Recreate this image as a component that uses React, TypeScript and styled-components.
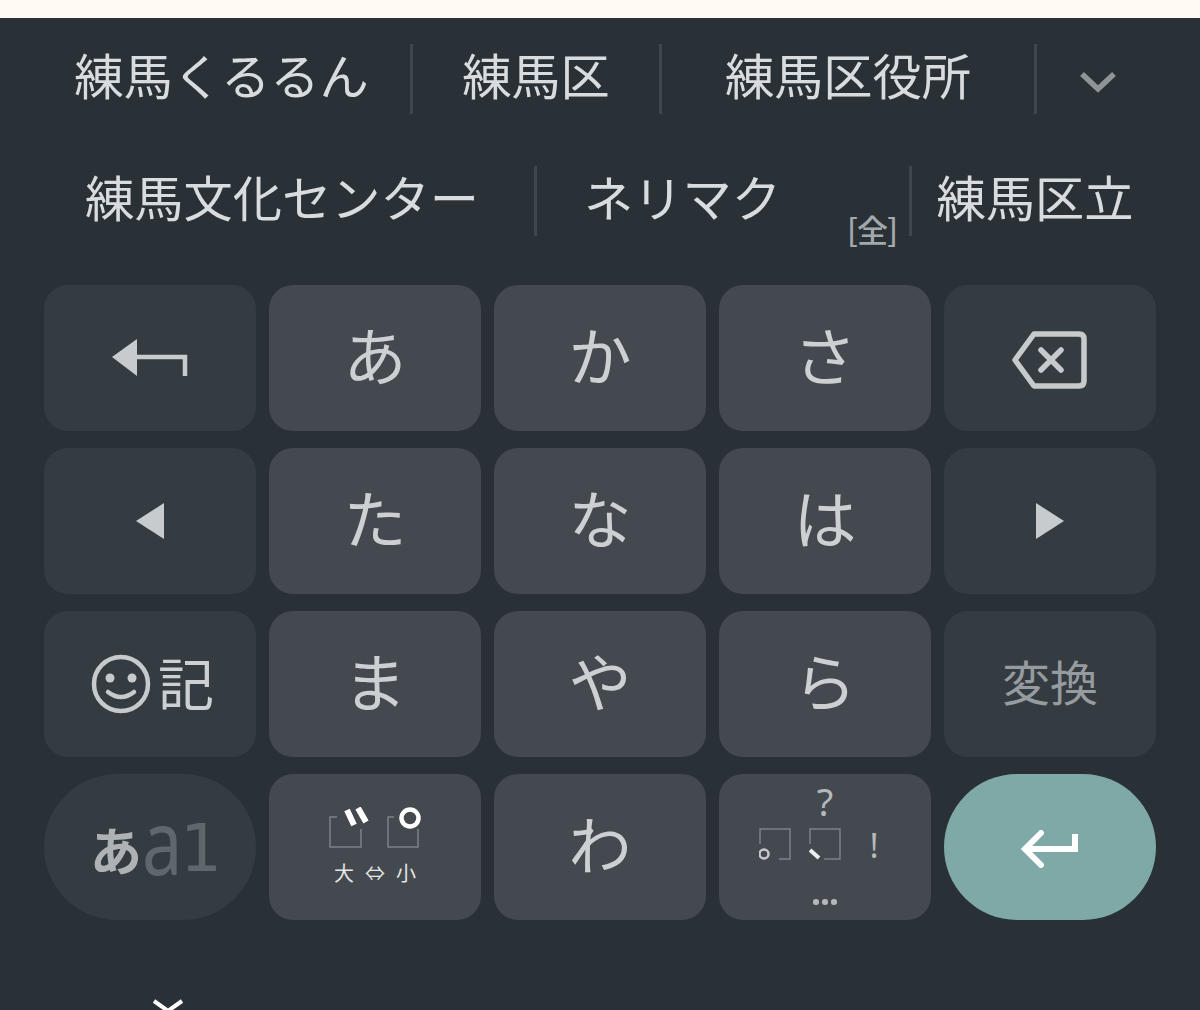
import React from "react";
import styled, { createGlobalStyle } from "styled-components";

const GlobalStyle = createGlobalStyle`
  html, body {
    margin: 0;
    padding: 0;
    background: #2a3136;
  }
  body {
    font-family: "Noto Sans CJK JP", "Noto Sans", sans-serif;
  }
`;

const Page = styled.div`
  width: 1200px;
  height: 1010px;
  overflow: hidden;
  display: flex;
  flex-direction: column;
  background: #2a3136;
`;

const TopStrip = styled.div`
  height: 18px;
  flex: none;
  background: #fffaf3;
`;

const Suggestions = styled.div`
  display: flex;
  flex-direction: column;
  gap: 52px;
  padding-top: 26px;
`;

const SuggestionRow = styled.div<{ $columns: string; $left: number }>`
  display: grid;
  grid-template-columns: ${({ $columns }) => $columns};
  height: 70px;
  padding-left: ${({ $left }) => $left}px;
`;

const Suggestion = styled.div<{ $divider?: boolean; $offset?: number }>`
  position: relative;
  display: flex;
  align-items: center;
  justify-content: ${({ $offset }) => ($offset ? "flex-start" : "center")};
  padding-left: ${({ $offset }) => $offset ?? 0}px;
  border-right: ${({ $divider }) => ($divider ? "3px solid #40474c" : "none")};
  color: #d9dcdf;
  font-size: 49.25px;
  font-weight: 400;
  white-space: nowrap;
`;

const SuggestionText = styled.span`
  line-height: 60px;
  margin-bottom: 10px;
`;

const ChevronSlot = styled.span`
  display: flex;
  margin: 6px 6px 0 0;
`;

const FullWidthTag = styled.span`
  position: absolute;
  right: 12px;
  bottom: -8px;
  color: #a3a8ac;
  font-size: 31px;
  font-weight: 500;
  line-height: 30px;
  letter-spacing: -1px;
`;

const Keys = styled.div`
  display: grid;
  grid-template-columns: repeat(5, 212px);
  grid-template-rows: repeat(4, 145.5px);
  column-gap: 13px;
  row-gap: 17.5px;
  padding: 49px 0 0 44px;
`;

const Key = styled.div<{ $tone?: "light" | "dark" | "accent"; $round?: boolean }>`
  display: flex;
  align-items: center;
  justify-content: center;
  border-radius: ${({ $round }) => ($round ? "73px" : "24px")};
  background: ${({ $tone }) =>
    $tone === "dark" ? "#353c41" : $tone === "accent" ? "#7ea9a6" : "#43494e"};
  color: #cdd0d3;
`;

const Kana = styled.span`
  font-size: 63px;
  font-weight: 400;
  line-height: 1;
  margin-bottom: 10px;
`;

const ConvertLabel = styled.span`
  color: #969b9f;
  font-size: 48px;
  font-weight: 400;
  line-height: 1;
  margin-bottom: 8px;
`;

const SymbolKey = styled.div`
  display: flex;
  align-items: center;
  gap: 7px;
  margin-left: 5px;
`;

const SymbolLabel = styled.span`
  font-size: 56px;
  font-weight: 400;
  line-height: 1;
  margin-bottom: 6px;
`;

const ModeLabel = styled.div`
  display: flex;
  align-items: center;
  height: 60px;
  margin: 4px 0 0 12px;
`;

const ModeKana = styled.span`
  color: #aeb2b5;
  font-size: 52px;
  font-weight: 700;
  line-height: 1;
`;

const ModeLetter = styled.span`
  display: inline-block;
  width: 41px;
  color: #5f666c;
  font-family: "Noto Sans", sans-serif;
  font-size: 90px;
  font-weight: 400;
  line-height: 60px;
  transform: scaleX(0.8);
  transform-origin: left center;
  margin-top: -18px;
`;

const ModeDigit = styled.span`
  color: #5f666c;
  font-family: "DejaVu Sans", sans-serif;
  font-size: 66px;
  line-height: 60px;
  margin-left: -3px;
`;

const MarkKey = styled.div`
  display: flex;
  flex-direction: column;
  align-items: center;
  gap: 10px;
`;

const SizeHint = styled.div`
  display: flex;
  align-items: center;
  gap: 11px;
  color: #e4e6e8;
  font-size: 20px;
  line-height: 28px;
`;

const PunctuationKey = styled.div`
  display: flex;
  flex-direction: column;
  align-items: center;
  height: 100%;
  width: 100%;
  color: #b4b8bb;
`;

const Question = styled.span`
  font-family: "Noto Sans", sans-serif;
  font-size: 38px;
  line-height: 38px;
  margin-top: 8px;
`;

const PunctuationRow = styled.div`
  display: flex;
  align-items: center;
  margin-top: 7px;
  gap: 18px;
`;

const Exclamation = styled.span`
  font-family: "Noto Sans", sans-serif;
  font-size: 34px;
  line-height: 36px;
  margin-left: 10px;
  margin-right: 12px;
`;

const Dots = styled.span`
  display: flex;
  gap: 3.5px;
  margin-top: 36px;
`;

const Dot = styled.i`
  width: 5.5px;
  height: 5.5px;
  border-radius: 50%;
  background: #b4b8bb;
`;

const Footer = styled.div`
  padding: 79px 0 0 152px;
`;

const BackIcon = () => (
  <svg width="78" height="40" viewBox="0 0 78 40" fill="none">
    <path d="M1 19 26 1V38Z" fill="#c8cbce" />
    <path d="M24 19H74V38" stroke="#c8cbce" strokeWidth="4.5" />
  </svg>
);

const BackspaceIcon = () => (
  <svg width="76" height="58" viewBox="0 0 76 58" fill="none" style={{ marginTop: 4 }}>
    <path
      d="M22 3H67Q72 3 72 8V50Q72 55 67 55H22L3 29Z"
      stroke="#c6cacd"
      strokeWidth="5.5"
      strokeLinejoin="round"
    />
    <path d="M29 19 49 39M49 19 29 39" stroke="#c6cacd" strokeWidth="5.5" strokeLinecap="round" />
  </svg>
);

const Triangle = ({ dir }: { dir: "left" | "right" }) => (
  <svg width="28" height="36" viewBox="0 0 28 36">
    <path d={dir === "left" ? "M0 18 28 0V36Z" : "M28 18 0 0V36Z"} fill="#c8cbce" />
  </svg>
);

const SmileIcon = () => (
  <svg width="60" height="60" viewBox="0 0 60 60" fill="none">
    <circle cx="30" cy="30" r="27" stroke="#c6cacd" strokeWidth="4.5" />
    <circle cx="19" cy="24" r="4.5" fill="#c6cacd" />
    <circle cx="41" cy="24" r="4.5" fill="#c6cacd" />
    <path d="M17 38Q30 48 43 38" stroke="#c6cacd" strokeWidth="4.5" strokeLinecap="round" />
  </svg>
);

const VoicedMarks = () => (
  <svg width="92" height="42" viewBox="0 0 92 42" fill="none">
    <path d="M8 10H1V40H32V22" stroke="#7c8186" strokeWidth="1.5" />
    <path d="M18 3 25 18M29 1 37 15" stroke="#fff" strokeWidth="6" />
    <path d="M65 10H59V40H89V22" stroke="#7c8186" strokeWidth="1.5" />
    <circle cx="81" cy="11" r="8.5" stroke="#fff" strokeWidth="4.5" />
  </svg>
);

const MaruBox = () => (
  <svg width="32" height="34" viewBox="0 0 32 34" fill="none">
    <path d="M1 16V1H31V31H20" stroke="#7c8186" strokeWidth="1.5" />
    <circle cx="5" cy="26" r="4.5" stroke="#c6cacd" strokeWidth="2.5" />
  </svg>
);

const TenBox = () => (
  <svg width="32" height="34" viewBox="0 0 32 34" fill="none">
    <path d="M1 16V1H31V31H15" stroke="#7c8186" strokeWidth="1.5" />
    <path d="M1 22 10 30" stroke="#eceeef" strokeWidth="4" />
  </svg>
);

const EnterIcon = () => (
  <svg width="58" height="38" viewBox="0 0 58 38" fill="none" style={{ marginTop: 4 }}>
    <path d="M20 3 4 19 20 35" stroke="#fff" strokeWidth="6" strokeLinecap="round" />
    <path d="M4 19H54V4" stroke="#fff" strokeWidth="6" />
  </svg>
);

const ChevronIcon = () => (
  <svg width="36" height="24" viewBox="0 0 36 24" fill="none">
    <path d="M2 4 18 19 34 4" stroke="#8f9498" strokeWidth="5.5" />
  </svg>
);

const CloseIcon = () => (
  <svg width="32" height="32" viewBox="0 0 32 32" fill="none" style={{ display: "block" }}>
    <path d="M2 2 16 12 30 2M16 12 2 24M16 12 30 24" stroke="#fff" strokeWidth="4" />
  </svg>
);

const App = () => {
  return (
    <Page>
      <GlobalStyle />
      <TopStrip />
      <Suggestions>
        <SuggestionRow $left={33} $columns="380px 249px 375px 127px">
          <Suggestion $divider><SuggestionText>練馬くるるん</SuggestionText></Suggestion>
          <Suggestion $divider><SuggestionText>練馬区</SuggestionText></Suggestion>
          <Suggestion $divider><SuggestionText>練馬区役所</SuggestionText></Suggestion>
          <Suggestion>
            <ChevronSlot>
              <ChevronIcon />
            </ChevronSlot>
          </Suggestion>
        </SuggestionRow>
        <SuggestionRow $left={30} $columns="507px 375px 246px">
          <Suggestion $divider><SuggestionText>練馬文化センター</SuggestionText></Suggestion>
          <Suggestion $divider $offset={47}>
            <SuggestionText>ネリマク</SuggestionText>
            <FullWidthTag>[全]</FullWidthTag>
          </Suggestion>
          <Suggestion><SuggestionText>練馬区立</SuggestionText></Suggestion>
        </SuggestionRow>
      </Suggestions>
      <Keys>
        <Key $tone="dark">
          <BackIcon />
        </Key>
        <Key><Kana>あ</Kana></Key>
        <Key><Kana>か</Kana></Key>
        <Key><Kana>さ</Kana></Key>
        <Key $tone="dark">
          <BackspaceIcon />
        </Key>

        <Key $tone="dark">
          <Triangle dir="left" />
        </Key>
        <Key><Kana>た</Kana></Key>
        <Key><Kana>な</Kana></Key>
        <Key><Kana>は</Kana></Key>
        <Key $tone="dark">
          <Triangle dir="right" />
        </Key>

        <Key $tone="dark">
          <SymbolKey>
            <SmileIcon />
            <SymbolLabel>記</SymbolLabel>
          </SymbolKey>
        </Key>
        <Key><Kana>ま</Kana></Key>
        <Key><Kana>や</Kana></Key>
        <Key><Kana>ら</Kana></Key>
        <Key $tone="dark">
          <ConvertLabel>変換</ConvertLabel>
        </Key>

        <Key $tone="dark" $round>
          <ModeLabel>
            <ModeKana>あ</ModeKana>
            <ModeLetter>a</ModeLetter>
            <ModeDigit>1</ModeDigit>
          </ModeLabel>
        </Key>
        <Key>
          <MarkKey>
            <VoicedMarks />
            <SizeHint>
              <span>大</span>
              <span>⇔</span>
              <span>小</span>
            </SizeHint>
          </MarkKey>
        </Key>
        <Key><Kana>わ</Kana></Key>
        <Key>
          <PunctuationKey>
            <Question>?</Question>
            <PunctuationRow>
              <MaruBox />
              <TenBox />
              <Exclamation>!</Exclamation>
            </PunctuationRow>
            <Dots>
              <Dot />
              <Dot />
              <Dot />
            </Dots>
          </PunctuationKey>
        </Key>
        <Key $tone="accent" $round>
          <EnterIcon />
        </Key>
      </Keys>
      <Footer>
        <CloseIcon />
      </Footer>
    </Page>
  );
};

export default App;
